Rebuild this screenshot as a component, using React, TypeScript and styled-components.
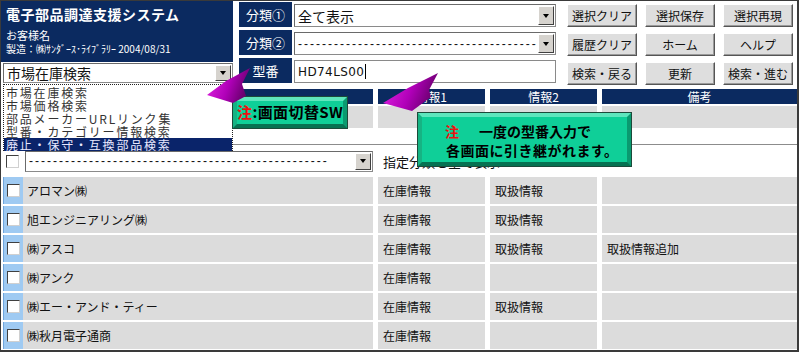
import React from "react";
import styled, { createGlobalStyle } from "styled-components";

const Global = createGlobalStyle`
  html, body {
    margin: 0;
    padding: 0;
    background: #ffffff;
  }
`;

const NAVY = "#0b2a60";

const Frame = styled.div`
  position: relative;
  width: 799px;
  height: 352px;
  box-sizing: border-box;
  border: 1px solid #3a3a3a;
  border-right-width: 2px;
  border-bottom-width: 2px;
  background: #ffffff;
  overflow: hidden;
  font-family: "Noto Sans CJK JP", "Noto Sans", sans-serif;
  color: #111;
`;

const Top = styled.div`
  display: flex;
  height: 86px;
`;

const LeftPanel = styled.div`
  width: 232px;
  display: flex;
  flex-direction: column;
`;

const Brand = styled.div`
  height: 61px;
  background: ${NAVY};
  color: #ffffff;
  padding: 4px 0 0 5px;
  box-sizing: border-box;
  display: flex;
  flex-direction: column;
`;

const BrandTitle = styled.div`
  font-size: 14px;
  font-weight: bold;
  line-height: 19px;
  letter-spacing: 0.5px;
`;

const BrandSub = styled.div<{ $size: number }>`
  font-size: ${(p) => p.$size}px;
  line-height: 14px;
  white-space: nowrap;
`;

const SelectBox = styled.div<{ $w: number; $h: number }>`
  width: ${(p) => p.$w}px;
  height: ${(p) => p.$h}px;
  box-sizing: border-box;
  display: flex;
  align-items: center;
  background: #ffffff;
  border: 1px solid #8a8a8a;
  border-top-color: #6a6a6a;
  border-left-color: #6a6a6a;
`;

const SelectText = styled.div<{ $size?: number }>`
  flex: 1;
  padding-left: 3px;
  font-size: ${(p) => p.$size ?? 13}px;
  white-space: nowrap;
  overflow: hidden;
`;

const Dashes = styled.div`
  flex: 1;
  padding-left: 3px;
  overflow: hidden;
  white-space: nowrap;
  font-family: "Liberation Sans", sans-serif;
  font-size: 12px;
  letter-spacing: 2px;
`;

const DropButton = styled.div`
  width: 16px;
  height: calc(100% - 2px);
  margin-right: 1px;
  box-sizing: border-box;
  background: #d6d3ce;
  border: 1px solid;
  border-color: #ffffff #404040 #404040 #ffffff;
  display: flex;
  align-items: center;
  justify-content: center;
  &::after {
    content: "";
    border-left: 3.5px solid transparent;
    border-right: 3.5px solid transparent;
    border-top: 4px solid #000;
  }
`;

const MainSelect = styled(SelectBox)`
  margin: 1px 0 0 2px;
`;

const Labels = styled.div`
  margin: 1px 0 0 6px;
  width: 53px;
  display: flex;
  flex-direction: column;
  gap: 3px;
`;

const Label = styled.div`
  height: 25px;
  background: ${NAVY};
  color: #ffffff;
  font-size: 13px;
  display: flex;
  align-items: center;
  justify-content: center;
`;

const Fields = styled.div`
  margin: 1px 0 0 2px;
  width: 262px;
  display: flex;
  flex-direction: column;
  gap: 3px;
`;

const FieldRow = styled.div`
  height: 25px;
  display: flex;
  align-items: flex-end;
`;

const TextInput = styled.div`
  width: 262px;
  height: 23px;
  box-sizing: border-box;
  border: 1px solid #8a8a8a;
  background: #ffffff;
  display: flex;
  align-items: center;
  padding-left: 3px;
  font-family: "DejaVu Sans", sans-serif;
  font-size: 12px;
  letter-spacing: 0.4px;
`;

const Caret = styled.span`
  display: inline-block;
  width: 1px;
  height: 15px;
  background: #000;
  margin-left: 1px;
`;

const Buttons = styled.div`
  margin: 3px 0 0 11px;
  display: grid;
  grid-template-columns: repeat(3, 70px);
  grid-auto-rows: 23px;
  column-gap: 8px;
  row-gap: 6px;
`;

const Button = styled.div`
  box-sizing: border-box;
  background: #dedede;
  border: 1px solid;
  border-color: #ffffff #555555 #555555 #ffffff;
  box-shadow: inset -1px -1px 0 #9a9a9a;
  font-size: 12px;
  display: flex;
  align-items: center;
  justify-content: center;
  white-space: nowrap;
`;

const Table = styled.div`
  margin-top: 2px;
  padding-left: 2px;
`;

const Grid = styled.div`
  display: grid;
  grid-template-columns: 370px 107px 107px 195px;
  column-gap: 5px;
`;

const HeadCell = styled.div`
  height: 15px;
  background: ${NAVY};
  color: #ffffff;
  font-size: 12px;
  line-height: 15px;
  text-align: center;
`;

const HeadBlock = styled.div`
  height: 56px;
  border-bottom: 1px solid #8c8c8c;
  box-sizing: border-box;
`;

const GrayRow = styled(Grid)`
  margin-top: 2px;
`;

const GrayCell = styled.div`
  height: 22px;
  background: #dcdcdc;
`;

const FilterRow = styled.div`
  height: 32px;
  display: flex;
  align-items: center;
`;

const Check = styled.div`
  width: 13px;
  height: 13px;
  box-sizing: border-box;
  background: #ffffff;
  border: 1px solid;
  border-color: #404040 #d0d0d0 #d0d0d0 #404040;
  flex: none;
`;

const FilterCheck = styled(Check)`
  margin: 0 6px 0 3px;
`;

const FilterText = styled.div`
  margin-left: 10px;
  font-size: 13px;
`;

const Rows = styled.div`
  display: flex;
  flex-direction: column;
  gap: 2px;
`;

const DataRow = styled(Grid)`
  height: 27px;
`;

const NameCell = styled.div`
  display: flex;
  align-items: center;
  background: #dcdcdc;
`;

const Strip = styled.div`
  width: 20px;
  align-self: stretch;
  background: #9fcaf2;
  border-left: 1px solid #6fa5dc;
  box-sizing: border-box;
  display: flex;
  align-items: center;
  justify-content: center;
`;

const NameText = styled.div`
  margin-left: 4px;
  font-size: 12px;
`;

const Cell = styled.div`
  background: #dcdcdc;
  font-size: 12px;
  display: flex;
  align-items: center;
  padding-left: 5px;
`;

const DropList = styled.div`
  position: absolute;
  left: 2px;
  top: 83px;
  width: 230px;
  height: 67px;
  box-sizing: border-box;
  background: #ffffff;
  border: 1px dotted #222;
  padding-top: 1px;
`;

const DropItem = styled.div<{ $active?: boolean }>`
  height: 13px;
  line-height: 13px;
  font-size: 12px;
  letter-spacing: 1.8px;
  padding-left: 2px;
  color: ${(p) => (p.$active ? "#e8e8ff" : "#333")};
  background: ${(p) => (p.$active ? "#0a246a" : "transparent")};
  white-space: nowrap;
  overflow: hidden;
`;

const Callout = styled.div<{ $l: number; $t: number; $w: number; $h: number }>`
  position: absolute;
  left: ${(p) => p.$l}px;
  top: ${(p) => p.$t}px;
  width: ${(p) => p.$w}px;
  height: ${(p) => p.$h}px;
  box-sizing: border-box;
  background: #0fcf98;
  border: 4px solid;
  border-color: #5fe6bd #0a9a70 #067252 #16b383;
  outline: 1px solid #1c4a3a;
  font-weight: bold;
  color: #000;
  font-family: "Noto Sans CJK JP", sans-serif;
`;

const Red = styled.span<{ $gap?: number }>`
  color: #f01010;
  margin-right: ${(p) => p.$gap ?? 0}px;
`;

const CalloutLine = styled.div<{ $size: number; $lh: number; $pad: number }>`
  font-size: ${(p) => p.$size}px;
  line-height: ${(p) => p.$lh}px;
  padding-left: ${(p) => p.$pad}px;
  white-space: nowrap;
`;

const Overlay = styled.svg`
  position: absolute;
  left: -1px;
  top: -1px;
  pointer-events: none;
`;

const names = [
  ["アロマン㈱", "在庫情報", "取扱情報", ""],
  ["旭エンジニアリング㈱", "在庫情報", "取扱情報", ""],
  ["㈱アスコ", "在庫情報", "取扱情報", "取扱情報追加"],
  ["㈱アンク", "在庫情報", "", ""],
  ["㈱エー・アンド・ティー", "在庫情報", "取扱情報", ""],
  ["㈱秋月電子通商", "在庫情報", "", ""],
];

const menu = [
  "市場在庫検索",
  "市場価格検索",
  "部品メーカーURLリンク集",
  "型番・カテゴリー情報検索",
  "廃止・保守・互換部品検索",
];

const buttons = [
  "選択クリア",
  "選択保存",
  "選択再現",
  "履歴クリア",
  "ホーム",
  "ヘルプ",
  "検索・戻る",
  "更新",
  "検索・進む",
];

const dash = (n: number) => "-".repeat(n);

export default function App() {
  return (
    <>
      <Global />
      <Frame>
        <Top>
          <LeftPanel>
            <Brand>
              <BrandTitle>電子部品調達支援システム</BrandTitle>
              <BrandSub $size={11} style={{ marginTop: 4 }}>
                お客様名
              </BrandSub>
              <BrandSub $size={10}>製造：㈱ｻﾝﾀﾞｰｽ･ﾗｲﾌﾞﾗﾘｰ 2004/08/31</BrandSub>
            </Brand>
            <MainSelect $w={230} $h={20}>
              <SelectText $size={14}>市場在庫検索</SelectText>
              <DropButton />
            </MainSelect>
          </LeftPanel>

          <Labels>
            <Label>分類①</Label>
            <Label>分類②</Label>
            <Label>型番</Label>
          </Labels>

          <Fields>
            <FieldRow>
              <SelectBox $w={262} $h={23}>
                <SelectText $size={14}>全て表示</SelectText>
                <DropButton />
              </SelectBox>
            </FieldRow>
            <FieldRow>
              <SelectBox $w={262} $h={23}>
                <Dashes>{dash(40)}</Dashes>
                <DropButton />
              </SelectBox>
            </FieldRow>
            <FieldRow>
              <TextInput>
                HD74LS00
                <Caret />
              </TextInput>
            </FieldRow>
          </Fields>

          <Buttons>
            {buttons.map((b) => (
              <Button key={b}>{b}</Button>
            ))}
          </Buttons>
        </Top>

        <Table>
          <HeadBlock>
            <Grid>
              <HeadCell>メーカー名</HeadCell>
              <HeadCell>情報1</HeadCell>
              <HeadCell>情報2</HeadCell>
              <HeadCell>備考</HeadCell>
            </Grid>
            <GrayRow>
              <GrayCell />
              <GrayCell />
              <GrayCell />
              <GrayCell />
            </GrayRow>
          </HeadBlock>

          <FilterRow>
            <FilterCheck />
            <SelectBox $w={348} $h={21}>
              <Dashes>{dash(50)}</Dashes>
              <DropButton />
            </SelectBox>
            <FilterText>指定分類を全て表示</FilterText>
          </FilterRow>

          <Rows>
            {names.map(([n, a, b, c]) => (
              <DataRow key={n}>
                <NameCell>
                  <Strip>
                    <Check />
                  </Strip>
                  <NameText>{n}</NameText>
                </NameCell>
                <Cell>{a}</Cell>
                <Cell>{b}</Cell>
                <Cell>{c}</Cell>
              </DataRow>
            ))}
          </Rows>
        </Table>

        <DropList>
          {menu.map((m, i) => (
            <DropItem key={m} $active={i === menu.length - 1}>
              {m}
            </DropItem>
          ))}
        </DropList>

        <Callout $l={232} $t={96} $w={114} $h={31}>
          <CalloutLine $size={15} $lh={22} $pad={0} style={{ letterSpacing: "0.4px" }}>
            <Red>注</Red>:画面切替SW
          </CalloutLine>
        </Callout>

        <Callout $l={417} $t={112} $w={213} $h={53}>
          <CalloutLine $size={14} $lh={19} $pad={23} style={{ marginTop: 5 }}>
            <Red $gap={20}>注</Red>一度の型番入力で
          </CalloutLine>
          <CalloutLine $size={14} $lh={19} $pad={24} style={{ letterSpacing: "0.5px" }}>
            各画面に引き継がれます。
          </CalloutLine>
        </Callout>

        <Overlay width="800" height="353" viewBox="0 0 800 353">
          <defs>
            <linearGradient id="mag" x1="0" y1="0" x2="1" y2="0.3">
              <stop offset="0" stopColor="#e628e6" />
              <stop offset="0.6" stopColor="#b000b8" />
              <stop offset="1" stopColor="#6a006e" />
            </linearGradient>
          </defs>
          <polygon points="207,95 226,81 250,68 242,84 246,96 233,103" fill="url(#mag)" />
          <polygon points="383,103 408,88 438,73 429,90 431,97 412,111" fill="url(#mag)" />
        </Overlay>
      </Frame>
    </>
  );
}
